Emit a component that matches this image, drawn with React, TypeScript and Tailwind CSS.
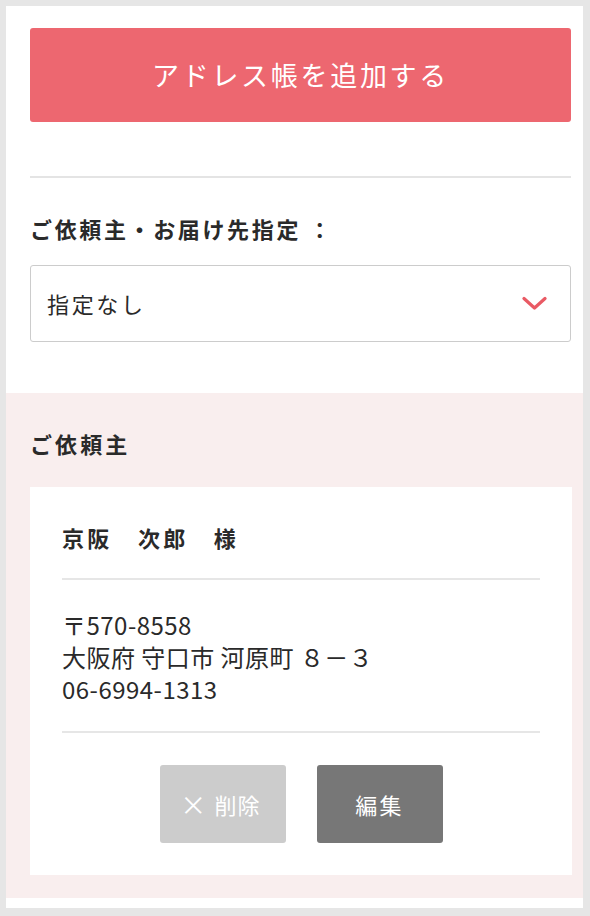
import React from "react";

export default function App() {
  return (
    <div className="w-[590px] h-[916px] bg-[#e6e6e6] pt-[6px] pl-[6px] pr-[7px] pb-[8px] font-['Noto_Sans_CJK_JP',sans-serif] text-[#2a2a2a]">
      <div className="bg-white h-full flex flex-col">
        <div className="pl-[24px] pr-[12px] pt-[22px]">
          <button className="w-full h-[94px] bg-[#ed6770] rounded-[3px] text-white text-[27px] tracking-[0.1em] flex items-center justify-center">
            アドレス帳を追加する
          </button>
          <div className="mt-[54px] h-[2px] bg-[#e4e4e4]" />
          <div className="mt-[34px] text-[22px] leading-[32px] font-bold tracking-[0.12em]">
            ご依頼主・お届け先指定 ：
          </div>
          <div className="mt-[21px] h-[77px] border-[1.5px] border-[#cccccc] rounded-[3px] flex items-center justify-between pl-[16px] pr-[23px]">
            <span className="text-[22px] tracking-[0.12em]">指定なし</span>
            <svg width="25" height="15" viewBox="0 0 25 15" fill="none">
              <path d="M2 2.5 L12.5 12 L23 2.5" stroke="#e95a64" strokeWidth="3.2" strokeLinecap="round" strokeLinejoin="round" />
            </svg>
          </div>
        </div>
        <div className="mt-[51px] bg-[#f9eeee] pl-[24px] pr-[11px] pt-[34px] pb-[23px]">
          <div className="text-[22px] leading-[32px] font-bold tracking-[0.14em]">ご依頼主</div>
          <div className="mt-[28px] bg-white px-[32px] pt-[34px] pb-[32px]">
            <div className="text-[22px] leading-[32px] font-bold tracking-[0.15em]">京阪　次郎　様</div>
            <div className="mt-[25px] h-[2px] bg-[#e6e6e6]" />
            <div className="mt-[29px] text-[24px] leading-[32px] tracking-[0.02em]">
              <div>〒570-8558</div>
              <div>大阪府 守口市 河原町 ８－３</div>
              <div>06-6994-1313</div>
            </div>
            <div className="mt-[26px] h-[2px] bg-[#e6e6e6]" />
            <div className="mt-[32px] flex justify-center gap-[31px]">
              <button className="w-[126px] h-[78px] bg-[#cccccc] rounded-[3px] text-white text-[22px] tracking-[0.05em] flex items-center justify-center pr-[4px]">
                <span className="text-[26px] leading-none mr-[7px]">×</span>削除
              </button>
              <button className="w-[126px] h-[78px] bg-[#777777] rounded-[3px] text-white text-[22px] tracking-[0.1em] flex items-center justify-center">
                編集
              </button>
            </div>
          </div>
        </div>
      </div>
    </div>
  );
}
